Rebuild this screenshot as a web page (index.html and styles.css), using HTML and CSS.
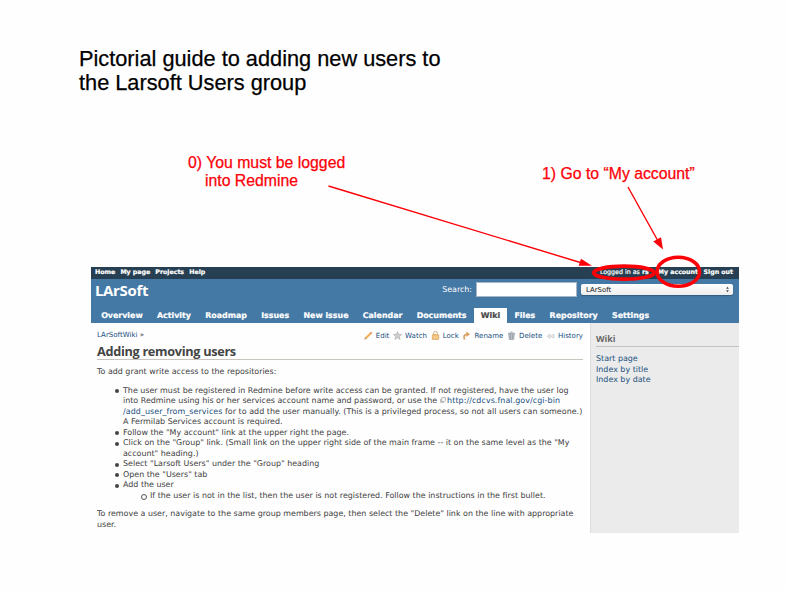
FILE: index.html
```
<!DOCTYPE html>
<html lang="en">
<head>
<meta charset="utf-8">
<title>Adding new users to the Larsoft Users group</title>
<link rel="stylesheet" href="styles.css">
</head>
<body>
<main class="slide">
  <h1 class="title">Pictorial guide to adding new users to<br>the Larsoft Users group</h1>
  <div class="notes">
    <p class="note note-login">0) You must be logged<br><span class="indent">into Redmine</span></p>
    <p class="note note-account">1) Go to “My account”</p>
  </div>
  <section class="app">
    <nav class="topbar">
      <a>Home</a><a>My page</a><a>Projects</a><a>Help</a>
      <span class="logged">Logged in as <b>rs</b></span><a class="t-account">My account</a><a class="t-out">Sign out</a>
    </nav>
    <header class="header">
      <div class="brand-row">
        <h2 class="brand">LArSoft</h2>
        <span class="search-label">Search:</span>
        <span class="search"></span>
        <span class="select"><span>LArSoft</span><svg width="5" height="7" viewBox="0 0 5 7"><path d="M2.5 .7 3.900 2.700H1.100zM2.500 6.300 3.900 4.300H1.100z" fill="#444"/></svg></span>
      </div>
      <nav class="tabs">
        <a>Overview</a><a>Activity</a><a>Roadmap</a><a>Issues</a><a>New issue</a><a>Calendar</a><a>Documents</a><a class="active">Wiki</a><a>Files</a><a>Repository</a><a>Settings</a>
      </nav>
    </header>
    <div class="body">
      <article class="content">
        <div class="crumbs">
          <span class="crumb"><a>LArSoftWiki</a> »</span>
          <div class="actions">
            <svg class="icon" viewBox="0 0 9 9"><path d="M1.2 7.8 6.8 2.2" stroke="#f3b04e" stroke-width="2"/><path d="M6.400 2.600 7.600 1.400" stroke="#e58a70" stroke-width="2"/><path d="M.4 8.600 1 6.600 2.400 8z" fill="#ad8464"/></svg><a>Edit</a>
            <svg class="icon" viewBox="0 0 9 9"><path d="M4.500.5 5.600 3.300 8.600 3.500 6.300 5.400 7.100 8.400 4.500 6.800 1.900 8.400 2.700 5.400.4 3.500 3.400 3.300z" fill="#d0d0d0" stroke="#aaa" stroke-width=".6"/></svg><a>Watch</a>
            <svg class="icon" viewBox="0 0 9 9"><path d="M2.500 4V2.500a2 2 0 0 1 4 0V4" fill="none" stroke="#c9ad83"/><rect x="1.300" y="3.600" width="6.400" height="5" rx=".8" fill="#f0bd71" stroke="#cf9650" stroke-width=".6"/><path d="M2 5.300h5M2 7h5" stroke="#f9dda9" stroke-width=".6"/></svg><a>Lock</a>
            <svg class="icon" viewBox="0 0 9 9"><path d="M2.600 8.500Q.8 3.300 5 3.300" fill="none" stroke="#d9a06a" stroke-width="1.800"/><path d="M4.400.5 8 3.200 4.400 6z" fill="#df9f59"/></svg><a>Rename</a>
            <svg class="icon" viewBox="0 0 9 9"><path d="M1.800 3H7.200L6.700 8.400H2.300z" fill="#c8cbd0" stroke="#888e98" stroke-width=".7"/><path d="M1 2.300H8M3.400 1H5.600M3.600 4V7.600M5.400 4V7.600" stroke="#888e98" stroke-width=".8"/></svg><a>Delete</a>
            <svg class="icon" viewBox="0 0 9 9"><path d="M4.200 3 1 5.200 4.200 7.400zM8 3 4.800 5.200 8 7.400z" fill="#e5e7e9" stroke="#b9bec3" stroke-width=".5"/></svg><a>History</a>
          </div>
        </div>
        <h3 class="heading">Adding removing users</h3>
        <p class="intro">To add grant write access to the repositories:</p>
        <ul class="steps">
          <li>The user must be registered in Redmine before write access can be granted. If not registered, have the user log<br>into Redmine using his or her services account name and password, or use the <svg class="ext" viewBox="0 0 6 6"><path d="M1.700.6H5.400V3.400L4.400 4.400H1.700zM.6 2V5.400H4" fill="none" stroke="#999" stroke-width=".7"/></svg><a class="link">http://cdcvs.fnal.gov/cgi-bin<br>/add_user_from_services</a><span class="wide"> for to add the user manually. (This is a privileged process, so not all users can someone.)</span><br>A Fermilab Services account is required.</li>
          <li>Follow the "My account" link at the upper right the page.</li>
          <li>Click on the "Group" link. (Small link on the upper right side of the main frame -- it on the same level as the "My<br>account" heading.)</li>
          <li>Select "Larsoft Users" under the "Group" heading</li>
          <li>Open the "Users" tab</li>
          <li>Add the user
            <ul><li>If the user is not in the list, then the user is not registered. Follow the instructions in the first bullet.</li></ul>
          </li>
        </ul>
        <p class="outro">To remove a user, navigate to the same group members page, then select the "Delete" link on the line with appropriate<br>user.</p>
      </article>
      <aside class="sidebar">
        <h4>Wiki</h4>
        <a>Start page</a><a>Index by title</a><a>Index by date</a>
      </aside>
    </div>
  </section>
  <svg class="marks" width="786" height="590" viewBox="0 0 786 590">
    <g fill="none" stroke="#fb0007">
      <path d="M328.500 186 582 263M628 187 658 241" stroke-width="1.400"/>
      <ellipse cx="624" cy="272.700" rx="30.300" ry="6.500" stroke-width="3.700"/>
      <ellipse cx="678.300" cy="271.800" rx="21.300" ry="14.500" stroke-width="3.500"/>
    </g>
    <path d="M592 265.700 578.700 265.800 581 258.800zM663 249.500 653.300 241.500 661 237.300z" fill="#fb0007"/>
  </svg>
</main>
</body>
</html>
```
FILE: styles.css
```
* { box-sizing: border-box; }
body { margin: 0; background: #fefefe; }
h1, h2, h3, h4, p, ul { margin: 0; padding: 0; font-weight: normal; }
.slide { position: relative; width: 786px; height: 590px; padding: 47px 47px 0 79px; overflow: hidden; font-family: "Liberation Sans", Arial, sans-serif; white-space: nowrap; }
.title { font-size: 21.75px; line-height: 24px; height: 107px; color: #000; -webkit-text-stroke: .25px #000; }
.notes { display: flex; height: 113px; padding-left: 109px; }
.note { font-size: 15.8px; line-height: 18px; color: #fb0007; -webkit-text-stroke: .25px #fb0007; }
.note-login { width: 354px; }
.note-account { padding-top: 11px; }
.indent { padding-left: 17px; }
.app { width: 648px; height: 266px; margin-left: 12px; font-family: "DejaVu Sans", Verdana, sans-serif; font-size: 7.95px; color: #404040; }
.app a { color: #205080; }
.topbar { display: flex; height: 12px; padding: 0 6px 0 4px; background: #273f52; color: #fff; line-height: 10px; font-size: 6.3px; -webkit-text-stroke: .2px #fff; }
.topbar a { color: #fff; font-weight: bold; margin-right: 5.1px; font-size: 6.25px; }
.topbar .t-account { margin-right: 5.5px; }
.topbar .t-out { margin-right: 0; }
.logged { margin-left: auto; margin-right: 9px; }
.header { height: 44px; background: #4478a5; color: #fff; }
.brand-row { display: flex; height: 29px; padding: 3px 6px 0 4px; }
.brand { flex: 1; font: bold 15px/18px "Open Sans", "Noto Sans", sans-serif; letter-spacing: -.35px; margin-top: -1px; }
.search-label { line-height: 15px; font-size: 7.9px; margin-right: 4px; }
.search { width: 101px; height: 15px; background: #fff; border: 1px solid #a9b6c3; margin-right: 4px; }
.select { display: flex; justify-content: space-between; align-items: center; width: 152px; height: 11px; margin-top: 2px; padding: 0 3px 0 5px; background: linear-gradient(#fff, #eee); border-radius: 2px; color: #111; box-shadow: 0 1px 1px #345b7d; font-size: 6.9px; }
.tabs { display: flex; height: 15px; padding-left: 3px; }
.tabs a { padding: 0 7.13px; line-height: 16px; font-size: 7.9px; font-weight: bold; color: #fff; -webkit-text-stroke: .2px #fff; }
.tabs .active { background: #fefefe; color: #484848; -webkit-text-stroke: .2px #484848; }
.body { display: flex; height: 210px; }
.content { width: 499px; padding: 6px 7px 0 6px; }
.crumbs { display: flex; justify-content: space-between; height: 14px; line-height: 12px; font-size: 7.05px; }
.actions { display: flex; align-items: center; height: 13px; }
.icon { width: 9px; height: 9px; margin: 0 3px 0 3.7px; }
.heading { height: 17px; border-bottom: 1px solid #c9c4bd; font: bold 12.700px/16px "Open Sans", "Noto Sans", sans-serif; letter-spacing: -.3px; color: #444; }
.intro { line-height: 10.5px; padding-top: 7px; }
.steps { padding: 8px 0 0 26px; line-height: 10.5px; list-style: none; }
.steps li { position: relative; }
.steps > li::before { content: ""; position: absolute; left: -8px; top: 3.5px; width: 4px; height: 4px; border-radius: 50%; background: #444; }
.steps ul { padding-left: 27px; list-style: none; }
.steps ul li::before { content: ""; position: absolute; left: -9px; top: 3.5px; width: 4px; height: 4px; border-radius: 50%; border: 1px solid #555; }
.ext { width: 6px; height: 6px; margin-right: 1.5px; }
.link { letter-spacing: .07px; }
.wide { letter-spacing: .03px; }
.outro { line-height: 10.5px; padding-top: 8px; }
.sidebar { flex: 1; padding: 10px 0 0 5px; background: #ebebeb; border-left: 1px solid #ddd; font-size: 7.95px; }
.sidebar h4 { height: 14px; margin-bottom: 7px; border-bottom: 1px solid #c4c2bf; font: bold 8.800px/13px "Open Sans", sans-serif; color: #666; }
.sidebar a { display: block; line-height: 10.5px; }
.marks { position: absolute; left: 0; top: 0; }
```
